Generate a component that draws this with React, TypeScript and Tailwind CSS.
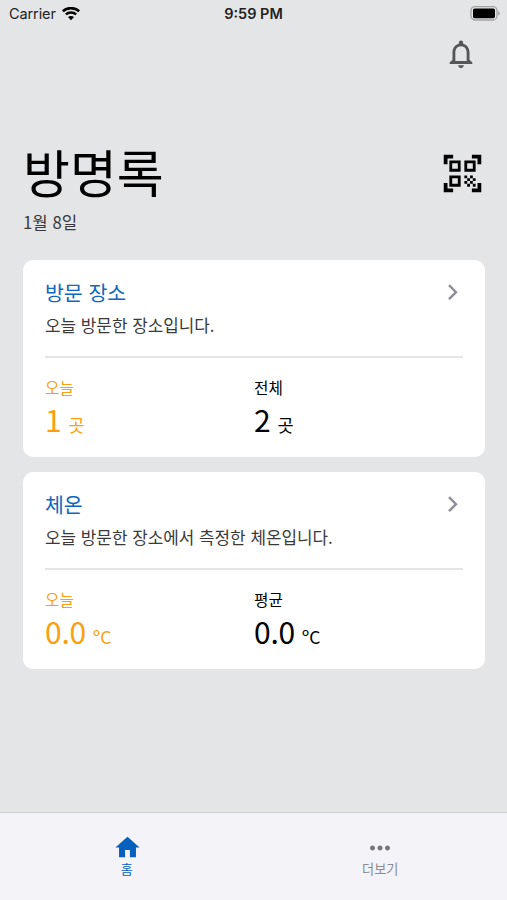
import React from "react";
import {
  MdHome,
  MdMoreHoriz,
  MdNotificationsNone,
  MdQrCodeScanner,
} from "react-icons/md";

const StatusBar: React.FC = () => {
  return (
    <div className="relative flex h-7 items-center justify-between pl-[9px] pr-[7px] font-['Inter','Noto_Sans',sans-serif] text-[#222]">
      <div className="flex items-center gap-[6px]">
        <span className="text-[14.5px] tracking-[-0.1px]">Carrier</span>
        <svg width="18" height="14" viewBox="0 0 18 14" fill="none" stroke="#000">
          <path d="M.8 4.2C5.4.1 12.6.1 17.2 4.2" strokeWidth="2.6" />
          <path d="M3.8 7.4c2.9-2.5 7.5-2.5 10.4 0" strokeWidth="2.4" />
          <path d="M9 13.2 6 10.1c1.7-1.5 4.3-1.5 6 0z" fill="#000" stroke="none" />
        </svg>
      </div>
      <span className="absolute left-1/2 -translate-x-1/2 text-[14.5px] font-semibold">
        9:59 PM
      </span>
      <svg width="30" height="16" viewBox="0 0 30 16">
        <rect x="1" y="0.6" width="26" height="13.4" rx="4" fill="none" stroke="#a2a3a5" strokeWidth="1.3" />
        <rect x="3" y="2.4" width="22" height="9.8" rx="1.6" fill="#000" />
        <path d="M28.2 4.9c2.2.8 2.2 3.8 0 4.6z" fill="#a2a3a5" />
      </svg>
    </div>
  );
};

const Stat: React.FC<{
  label: string;
  value: string;
  unit: string;
  color: string;
}> = ({ label, value, unit, color }) => {
  return (
    <div className={`w-1/2 ${color}`}>
      <p className="text-[15.7px] leading-6">{label}</p>
      <p className="-mt-[1px] flex items-baseline gap-[7px] leading-10">
        <span className="text-[30px] tracking-[-0.2px]">{value}</span>
        <span className="text-[17.5px]">{unit}</span>
      </p>
    </div>
  );
};

const Card: React.FC<{
  title: string;
  description: string;
  children: React.ReactNode;
}> = ({ title, description, children }) => {
  return (
    <section className="h-[197px] rounded-[10px] bg-white px-[22px] pt-[17px]">
      <header className="flex items-center justify-between">
        <h2 className="text-[20.5px] leading-[30px] text-[#0e68be]">{title}</h2>
        <svg className="mr-[4px]" width="12" height="18" viewBox="0 0 12 18" fill="none">
          <path d="m2 2.2 7 7-7 7" stroke="#8e8e99" strokeWidth="2.4" />
        </svg>
      </header>
      <p className="mt-[5px] text-[16.9px] leading-[26px] text-[#3a3a3a]">{description}</p>
      <hr className="mt-[18px] border-t-2 border-[#e5e6e8]" />
      <div className="mt-[18px] flex">{children}</div>
    </section>
  );
};

const App: React.FC = () => {
  return (
    <div
      lang="ko"
      className="flex h-[900px] w-[507px] flex-col overflow-hidden bg-[#e4e5e7] font-['Noto_Sans_CJK_KR',sans-serif] text-black"
    >
      <StatusBar />
      <div className="flex justify-end pr-[29px] pt-[9px]">
        <MdNotificationsNone className="size-[34px] text-[#555659]" />
      </div>
      <main className="flex-1 pl-[23px] pr-[22px] pt-[64px]">
        <div className="flex items-center justify-between">
          <h1 className="-mt-[2px] text-[51px] leading-[76px]">방명록</h1>
          <MdQrCodeScanner className="mt-[2px] size-[45px]" />
        </div>
        <p className="mt-[1px] text-[16.8px] leading-[24px] text-[#3a3a3a]">1월 8일</p>
        <div className="mt-[26px] flex flex-col gap-[15px]">
          <Card title="방문 장소" description="오늘 방문한 장소입니다.">
            <Stat label="오늘" value="1" unit="곳" color="text-[#fa9f0f]" />
            <Stat label="전체" value="2" unit="곳" color="text-black" />
          </Card>
          <Card title="체온" description="오늘 방문한 장소에서 측정한 체온입니다.">
            <Stat label="오늘" value="0.0" unit="ºC" color="text-[#fa9f0f]" />
            <Stat label="평균" value="0.0" unit="ºC" color="text-black" />
          </Card>
        </div>
      </main>
      <nav className="flex h-[88px] border-t border-[#cfd0d3] bg-[#f3f3f8] pt-[20px]">
        <div className="flex w-1/2 flex-col items-center text-[#0561bd]">
          <MdHome className="-mb-[1px] ml-[1px] size-[29px]" />
          <span className="text-[13px] leading-4">홈</span>
        </div>
        <div className="flex w-1/2 flex-col items-center text-[#8b8b90]">
          <MdMoreHoriz className="-mb-[2px] size-[30px] text-[#77777b]" />
          <span className="text-[13.2px] leading-4">더보기</span>
        </div>
      </nav>
    </div>
  );
};

export default App;
